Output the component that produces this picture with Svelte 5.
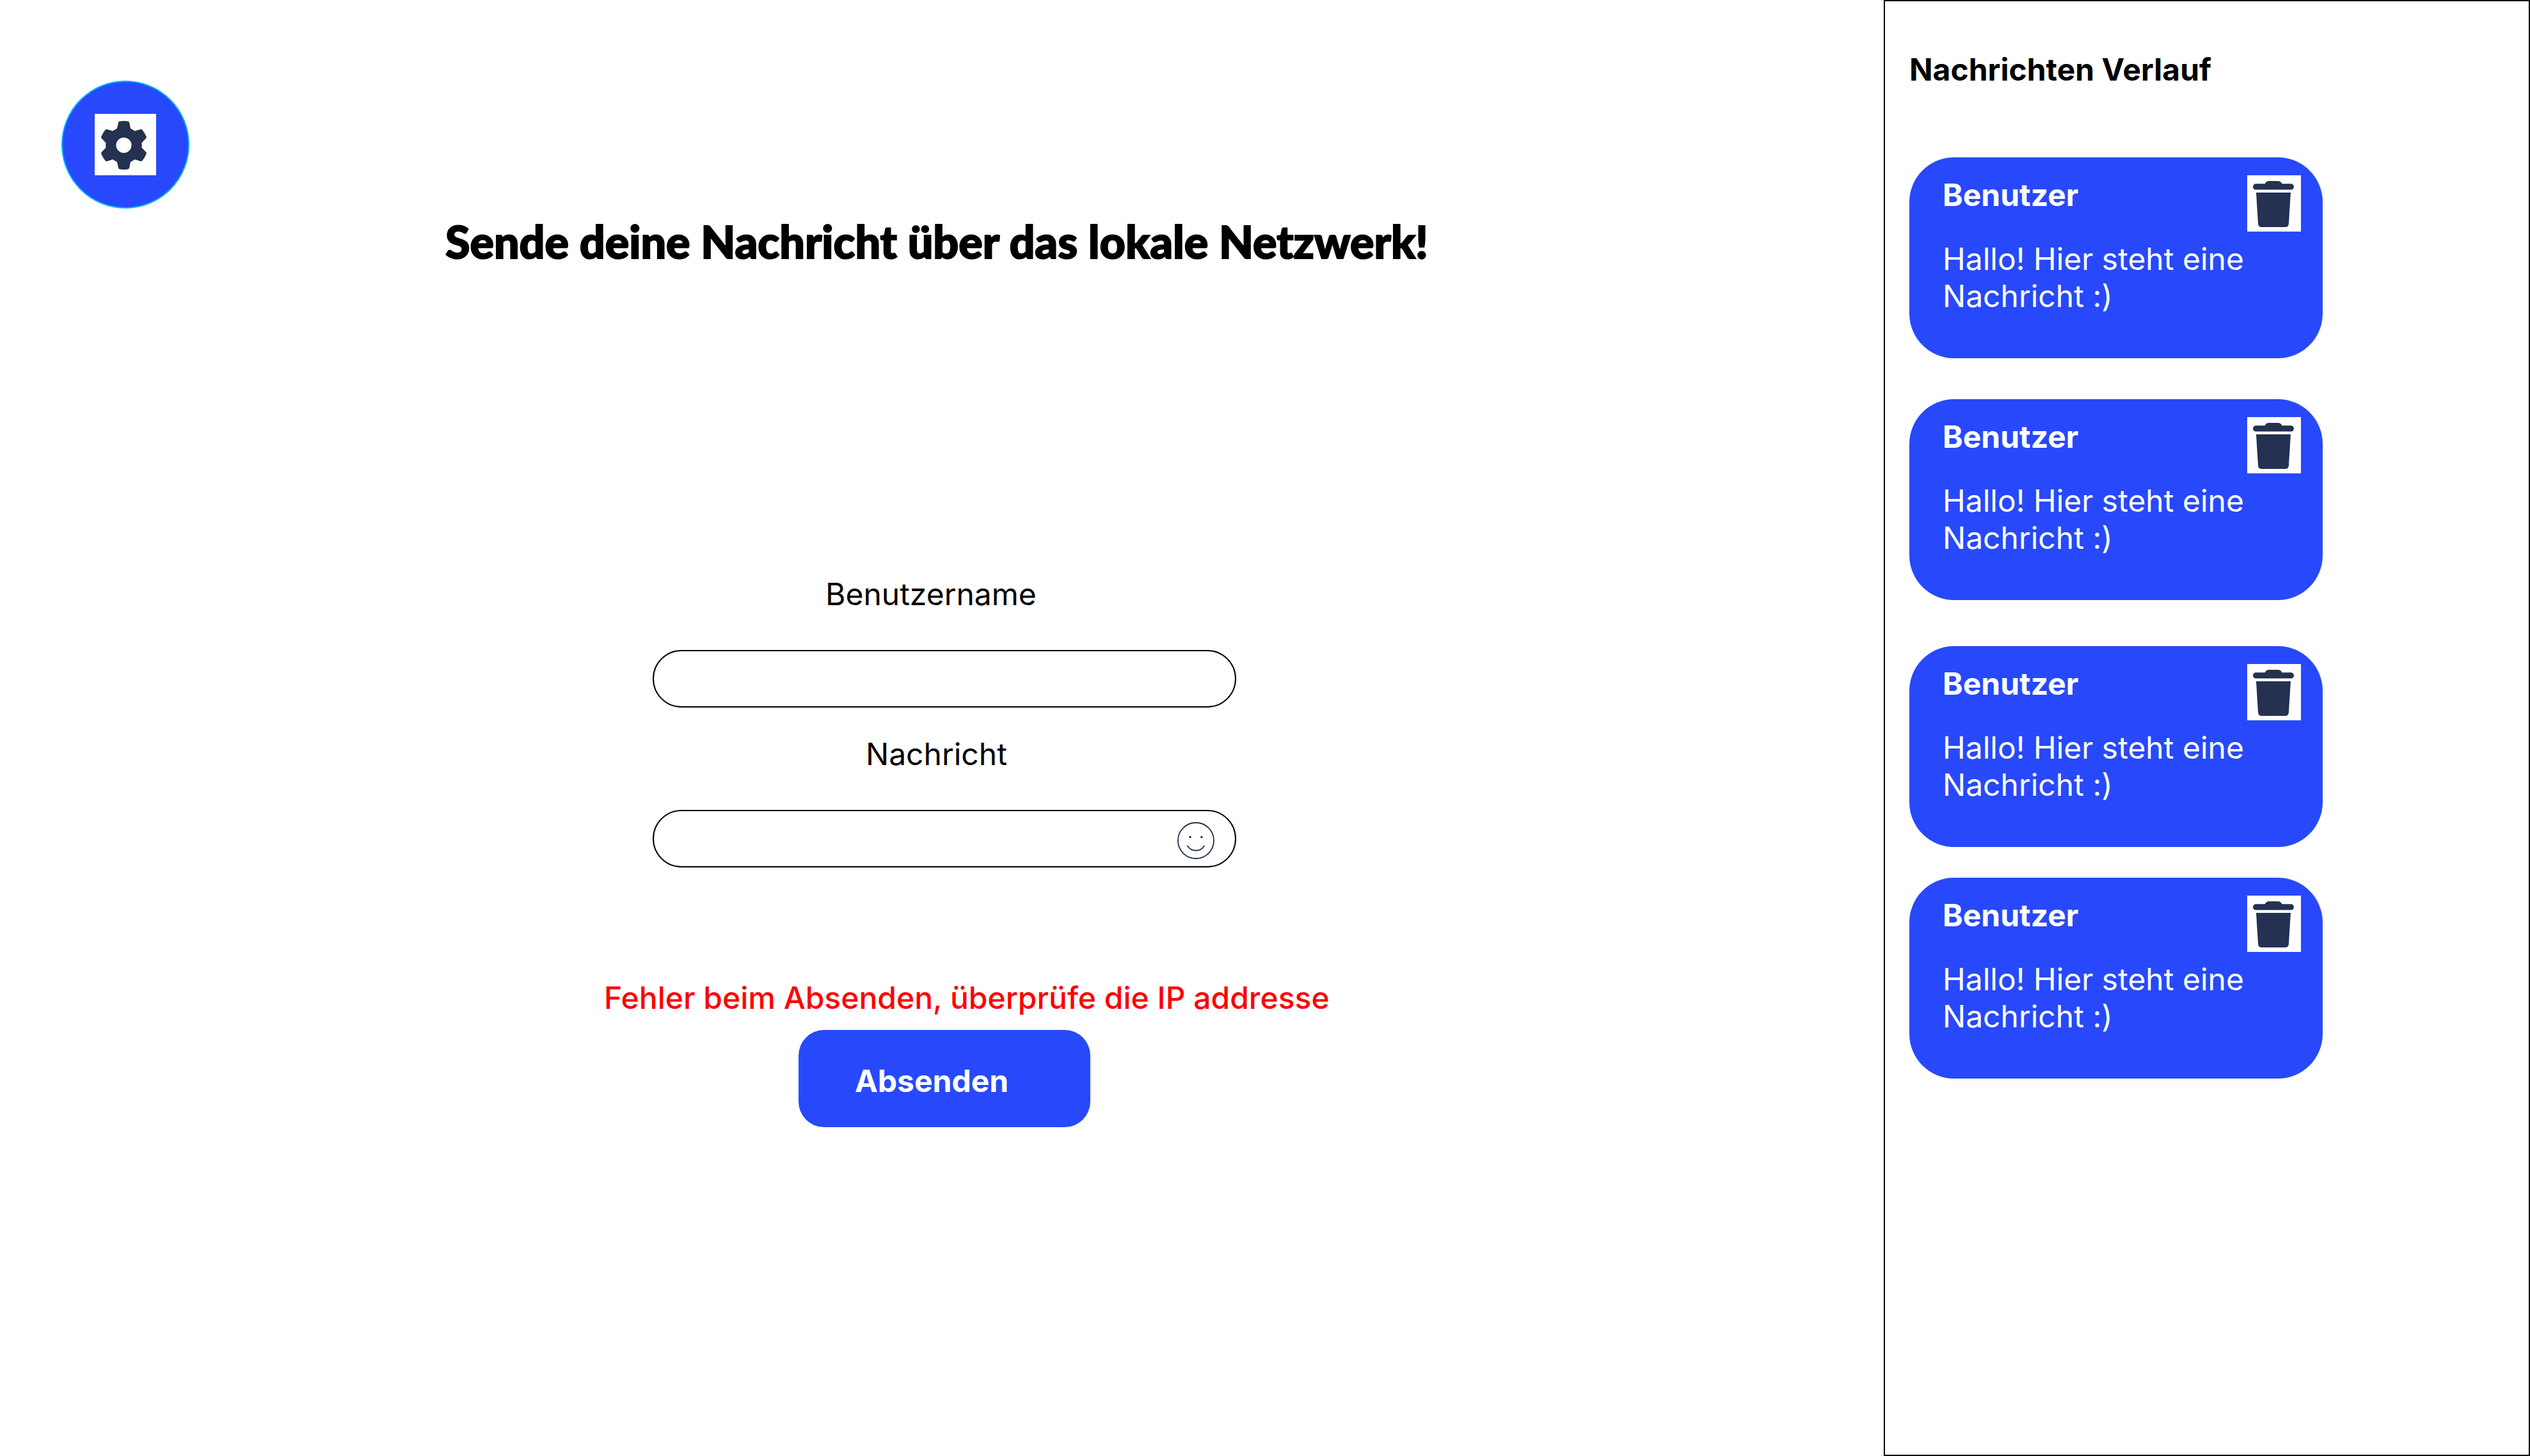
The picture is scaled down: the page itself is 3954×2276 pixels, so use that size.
<script>
  let username = $state('');
  let message = $state('');
  const text = 'Hallo! Hier steht eine Nachricht :)';
  const history = [
    { id: 1, user: 'Benutzer', text },
    { id: 2, user: 'Benutzer', text },
    { id: 3, user: 'Benutzer', text },
    { id: 4, user: 'Benutzer', text }
  ];
</script>

<div class="page">
  <main>
    <button class="settings" type="button" aria-label="Einstellungen">
      <svg viewBox="0 0 96 96" aria-hidden="true">
        <rect width="96" height="96" fill="#fff" />
        <path
          fill="#253150"
          fill-rule="evenodd"
          d="M39 11.6Q45.500 10.600 52 11.600Q53.700 11.900 54.200 14L56 22.700L62.700 26.700L71.500 24.200Q73.300 23.600 74.800 25.400Q78.500 30 80.700 35.600Q81.300 37.300 80 38.500L73.500 45.200Q74 49 73.500 52.800L80 59.500Q81.300 60.700 80.700 62.400Q78.500 68 74.800 72.800Q73.300 74.600 71.500 74L62.700 71.300L56 75.300L54.200 84Q53.700 86.100 52 86.400Q45.500 87.400 39 86.400Q37.300 86.100 36.900 84L35 75.300L28.200 71.300L19.500 74Q17.700 74.600 16.200 72.800Q12.500 68 10.300 62.400Q9.700 60.700 11 59.500L17.500 52.800Q17 49 17.500 45.200L11 38.500Q9.700 37.300 10.300 35.600Q12.500 30 16.200 25.400Q17.700 23.600 19.500 24.200L28.200 26.700L35 22.700L36.900 14Q37.300 11.900 39 11.600ZM45.500 37a12 12 0 1 0 0 24a12 12 0 1 0 0-24Z"
        />
      </svg>
    </button>

    <h1>Sende deine Nachricht über das lokale Netzwerk!</h1>

    <form onsubmit={(e) => e.preventDefault()}>
      <label class="label-user" for="username">Benutzername</label>
      <input id="username" type="text" bind:value={username} />

      <label class="label-message" for="message">Nachricht</label>
      <div class="message-box">
        <input id="message" type="text" bind:value={message} />
        <button class="emoji" type="button" aria-label="Emoji einfügen">
          <svg viewBox="0 0 58 58" aria-hidden="true">
            <g fill="none" stroke="#253150" stroke-width="1.800" stroke-linecap="round">
              <circle cx="29" cy="29" r="28" />
              <path d="M16 37.500Q20.500 44.500 29 44.500T42 37.500" />
            </g>
            <circle cx="20" cy="23.500" r="1.800" fill="#253150" />
            <circle cx="38" cy="23.500" r="1.800" fill="#253150" />
          </svg>
        </button>
      </div>

      <p class="error" role="alert">Fehler beim Absenden, überprüfe die IP addresse</p>
      <button class="submit" type="submit">Absenden</button>
    </form>
  </main>

  <aside>
    <h2>Nachrichten Verlauf</h2>
    <ul>
      {#each history as entry (entry.id)}
        <li>
          <div class="content">
            <h3>{entry.user}</h3>
            <p>{entry.text}</p>
          </div>
          <button class="delete" type="button" aria-label="Nachricht löschen">
            <svg viewBox="0 0 84 88" aria-hidden="true">
              <rect width="84" height="88" fill="#fff" />
              <g fill="#253150">
                <rect x="9" y="13.300" width="64" height="9.200" rx="4.600" />
                <path d="M27 15Q29 9 33.500 9H49Q53 9 55 15Z" />
                <path d="M14 27H68L65 75.500Q64.500 81 59.500 81H22.500Q17.500 81 17 75.500Z" />
              </g>
            </svg>
          </button>
        </li>
      {/each}
    </ul>
  </aside>
</div>

<style>
  :global(body) {
    background: #fff;
  }

  .page {
    display: grid;
    grid-template-columns: 2944fr 1010fr;
    min-height: 100vh;
    font-family: Inter, sans-serif;
    font-size: 48px;
    line-height: 58px;
    color: #000;
  }

  h1,
  h2,
  h3,
  p,
  ul {
    margin: 0;
    padding: 0;
  }

  button,
  input {
    box-sizing: border-box;
    font: inherit;
  }

  button {
    padding: 0;
    border: 0;
    background: none;
    cursor: pointer;
  }

  svg {
    display: block;
    width: 100%;
  }

  main {
    display: grid;
    grid-template-columns: minmax(0, 944fr) minmax(0, 1132fr) minmax(0, 868fr);
    align-content: start;
    padding-top: 126px;
  }

  .settings {
    grid-column: 1 / -1;
    display: grid;
    place-content: center;
    width: 200px;
    height: 200px;
    margin-left: 96px;
    border: 2px solid #00b2ff;
    border-radius: 50%;
    background: #2749fb;
  }

  .settings svg {
    width: 96px;
  }

  h1 {
    grid-column: 1 / -1;
    margin: 10px 16px 482px 0;
    font-family: Lato, sans-serif;
    font-size: 70px;
    font-weight: 900;
    line-height: 82px;
    text-align: center;
    -webkit-text-stroke: 2px #000;
  }

  form {
    grid-column: 2;
    display: flex;
    flex-direction: column;
    align-items: flex-start;
    padding-left: 76px;
  }

  .label-user {
    margin-left: 270px;
  }

  .label-message {
    margin-top: 44px;
    margin-left: 333px;
  }

  input {
    width: 100%;
    max-width: 912px;
    height: 90px;
    margin-top: 58px;
    padding: 0 40px;
    border: 2px solid #000;
    border-radius: 45px;
    background: #fff;
  }

  .message-box {
    position: relative;
    width: 100%;
    max-width: 912px;
    margin-top: 58px;
  }

  .message-box input {
    display: block;
    margin-top: 0;
    padding-right: 110px;
  }

  .emoji {
    position: absolute;
    top: 19px;
    right: 34px;
    width: 58px;
  }

  .error {
    margin-top: 175px;
    margin-left: -76px;
    color: #f00;
    font-weight: 500;
    white-space: nowrap;
  }

  .submit {
    width: 456px;
    margin-top: 21px;
    margin-left: 228px;
    padding: 51px 88px 43px;
    border-radius: 40px;
    background: #2749fb;
    color: #fff;
    font-weight: 700;
    text-align: left;
  }

  aside {
    padding: 78px 38px;
    border: 2px solid #000;
  }

  h2,
  h3 {
    font-size: 48px;
    font-weight: 700;
  }

  ul {
    max-width: 646px;
    margin-top: 108px;
    list-style: none;
  }

  li {
    display: flex;
    justify-content: space-between;
    box-sizing: border-box;
    min-height: 314px;
    margin-bottom: 64px;
    padding: 28px 34px 28px 52px;
    border-radius: 70px;
    background: #2749fb;
    color: #fff;
  }

  li:nth-child(2) {
    margin-bottom: 72px;
  }

  li:nth-child(3) {
    margin-bottom: 48px;
  }

  .content {
    flex: none;
    width: 476px;
    padding-top: 2px;
  }

  .content p {
    margin-top: 42px;
    font-weight: 400;
  }

  .delete {
    flex: none;
    align-self: flex-start;
    width: 84px;
  }
</style>
